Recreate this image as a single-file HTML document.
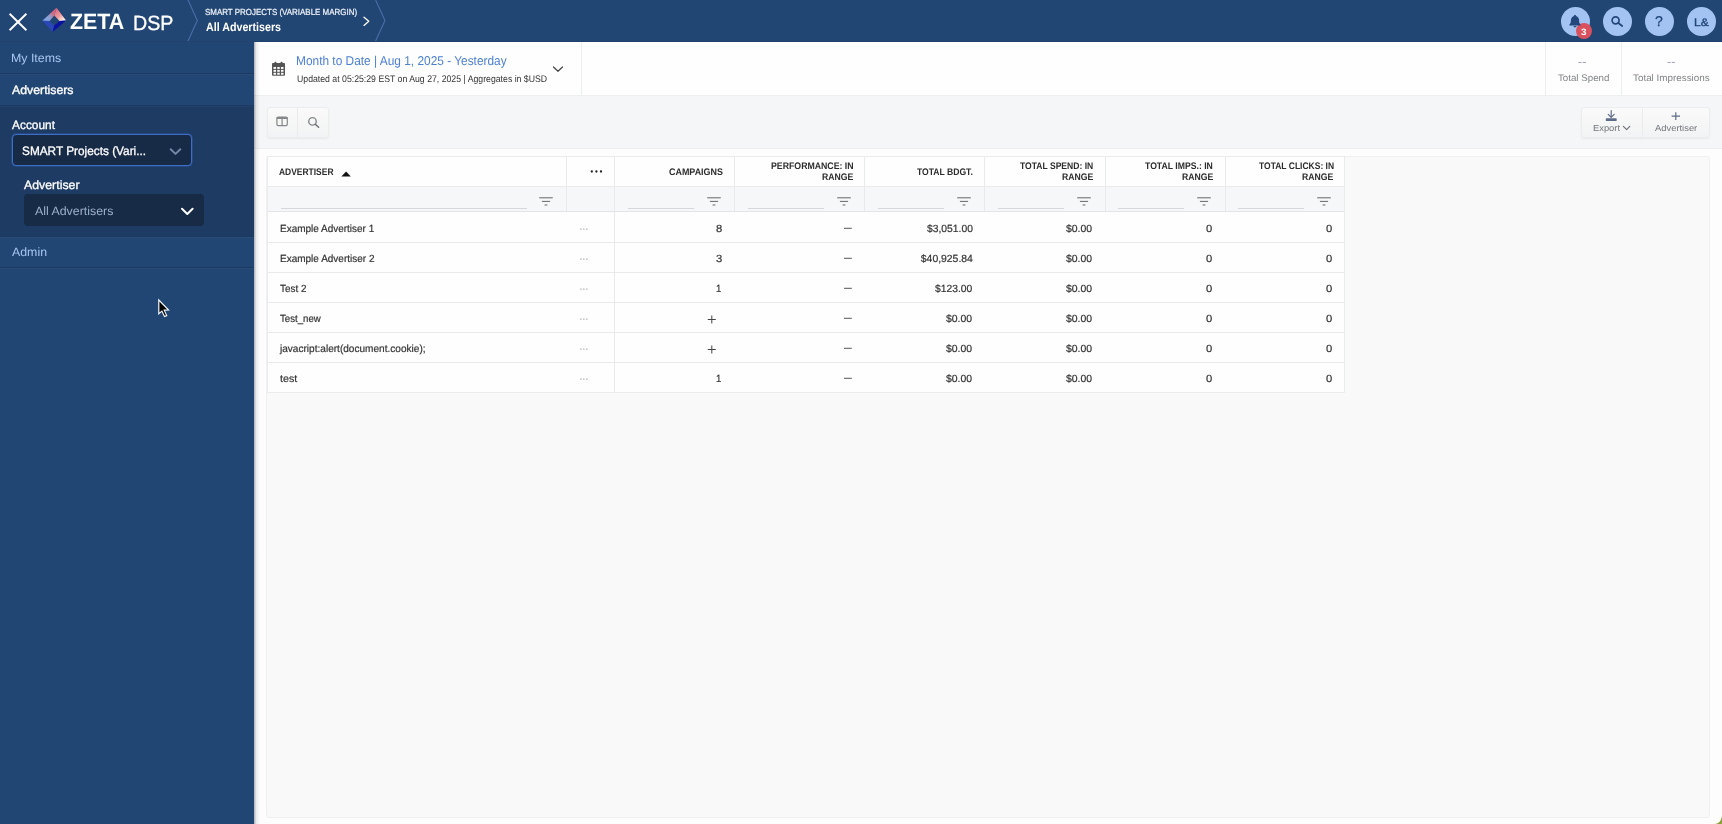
<!DOCTYPE html>
<html lang="en">
<head>
<meta charset="utf-8">
<title>Zeta DSP - All Advertisers</title>
<style>
*{box-sizing:border-box;margin:0;padding:0}
html,body{width:1722px;height:824px;overflow:hidden}
body{font-family:"Liberation Sans",Arial,sans-serif;background:#fdfdfd;color:#333;position:relative}
.a{position:absolute}
.t{position:absolute;white-space:nowrap;line-height:1;transform-origin:0 50%;text-rendering:geometricPrecision}
svg{position:absolute;overflow:visible}
#topbar{position:absolute;left:0;top:0;width:1722px;height:42px;background:#224673;border-bottom:1px solid #20426d}
#side{position:absolute;left:0;top:42px;width:254px;height:782px;background:#224673}
.sdiv{position:absolute;left:0;width:254px;height:1px;background:#1b3a63;box-shadow:0 1px 0 rgba(255,255,255,.035)}
#acct{position:absolute;left:0;top:63.5px;width:254px;height:130.5px;background:#1e3b64}
.sel{position:absolute;height:32px;width:180px;border-radius:4px;background:#172a46}
#hdr{position:absolute;left:254px;top:42px;width:1468px;height:53px;background:#fefefe}
#tool{position:absolute;left:254px;top:95px;width:1468px;height:54px;background:#f5f6f7;border-top:1px solid #eceef0;border-bottom:1px solid #ebedef}
#panel{position:absolute;left:266px;top:156px;width:1444px;height:662px;background:#f9f9f9;border:1px solid #f0f0f0;border-radius:3px}
#shadow{position:absolute;left:254px;top:42px;width:6px;height:782px;background:linear-gradient(90deg,rgba(20,30,50,.35),rgba(20,30,50,.08) 40%,rgba(0,0,0,0))}
.circ{position:absolute;top:6.5px;width:29px;height:29px;border-radius:50%;background:#a3c4f3}
.btn{position:absolute;background:linear-gradient(#fafafa,#f2f3f4);border:1px solid #eceded;border-radius:3px;box-shadow:0 1px 2px rgba(0,0,0,.06)}
#grid{position:absolute;left:267px;top:156px;width:1078px;height:237px;background:#fefefe;border:1px solid #e9ebed}
.hl{position:absolute;left:0;width:1076px;height:1px;background:#e8eaec}
.vl{position:absolute;width:1px;background:#e8eaec}
#frow{position:absolute;left:0;top:30px;width:1076px;height:24px;background:#f6f7f8}
.fl{position:absolute;height:1px;background:#d4d7db;top:51px}
</style>
</head>
<body>

<div id="topbar"></div>
<div id="side">
  <div class="sdiv" style="top:31px"></div>
  <div id="acct"></div>
  <div class="sdiv" style="top:62.5px"></div>
  <div class="sdiv" style="top:193.5px"></div>
  <div class="sdiv" style="top:225px"></div>
  <div class="sel" style="left:12px;top:92px;border:1px solid #3f6fc4;box-shadow:0 0 0 .5px #2d56a0"></div>
  <div class="sel" style="left:24px;top:152px"></div>
</div>
<div id="hdr"></div>
<div id="tool"></div>
<div id="panel"></div>

<!-- header dividers -->
<div class="a" style="left:580.5px;top:42px;width:1px;height:53px;background:#eceef0"></div>
<div class="a" style="left:1545px;top:42px;width:1px;height:53px;background:#eceef0"></div>
<div class="a" style="left:1620.5px;top:42px;width:1px;height:53px;background:#eceef0"></div>

<!-- toolbar buttons -->
<div class="btn" style="left:267px;top:107px;width:62px;height:31px"></div>
<div class="a" style="left:297px;top:108px;width:1px;height:29px;background:#eaebec"></div>
<div class="btn" style="left:1580.5px;top:107px;width:129px;height:31px"></div>
<div class="a" style="left:1642px;top:108px;width:1px;height:29px;background:#eaebec"></div>

<!-- grid -->
<div id="grid">
  <div id="frow"></div>
  <div class="hl" style="top:29px"></div>
  <div class="hl" style="top:54px;background:#e2e4e7"></div>
  <div class="hl" style="top:85px"></div>
  <div class="hl" style="top:115px"></div>
  <div class="hl" style="top:145px"></div>
  <div class="hl" style="top:175px"></div>
  <div class="hl" style="top:205px"></div>
  <div class="vl" style="left:298px;top:0;height:54px"></div>
  <div class="vl" style="left:346px;top:0;height:235px"></div>
  <div class="vl" style="left:466px;top:0;height:54px"></div>
  <div class="vl" style="left:596px;top:0;height:54px"></div>
  <div class="vl" style="left:716px;top:0;height:54px"></div>
  <div class="vl" style="left:837px;top:0;height:54px"></div>
  <div class="vl" style="left:957px;top:0;height:54px"></div>
  <div class="fl" style="left:13px;width:246px"></div>
  <div class="fl" style="left:360px;width:66px"></div>
  <div class="fl" style="left:480px;width:76px"></div>
  <div class="fl" style="left:610px;width:66px"></div>
  <div class="fl" style="left:730px;width:66px"></div>
  <div class="fl" style="left:850px;width:66px"></div>
  <div class="fl" style="left:970px;width:66px"></div>
</div>

<!-- close X -->
<svg style="left:0;top:0" width="1722" height="42" viewBox="0 0 1722 42" fill="none">
  <path d="M9.6 13.8 L26.4 30.2 M26.4 13.8 L9.6 30.2" stroke="#fff" stroke-width="1.9" stroke-linecap="butt"/>
  <!-- logo diamond -->
  <defs>
    <linearGradient id="lgTop" gradientUnits="userSpaceOnUse" x1="43" y1="20.500" x2="56" y2="9"><stop offset="0" stop-color="#7ea9ee"/><stop offset=".45" stop-color="#8f9ccb"/><stop offset=".7" stop-color="#cf6c86"/><stop offset="1" stop-color="#d9607c"/></linearGradient>
    <linearGradient id="lgR" gradientUnits="userSpaceOnUse" x1="56" y1="9" x2="65.500" y2="20.500"><stop offset="0" stop-color="#db6880"/><stop offset=".5" stop-color="#ee9a9a"/><stop offset=".8" stop-color="#f8dcd8"/><stop offset="1" stop-color="#ffffff"/></linearGradient>
  </defs>
  <path d="M42.300 20.800 L56.500 7.700 L54.300 15.500 L49.500 21 Z" fill="url(#lgTop)"/>
  <path d="M56.500 7.700 L66.100 20.600 L59.600 21 L54.300 15.500 Z" fill="url(#lgR)"/>
  <path d="M42.300 20.800 L49.500 21 L54.300 25.600 L52.600 32.100 Z" fill="#2b47b6"/>
  <path d="M52.600 32.100 L54.300 25.600 L59.600 21 L66.100 20.600 Z" fill="#0b11a2"/>
  <!-- breadcrumb chevrons -->
  <path d="M188 0 L197.3 20.5 L188 41" stroke="#4a6ea8" stroke-width="1.1"/>
  <path d="M375.6 0 L385 20.5 L375.6 41" stroke="#4a6ea8" stroke-width="1.1"/>
  <path d="M364 17.2 L368.8 21.3 L364 25.4" stroke="#fff" stroke-width="1.3" stroke-linecap="round" stroke-linejoin="round"/>
</svg>
<div class="circ" style="left:1560.5px"></div>
<div class="circ" style="left:1602.5px"></div>
<div class="circ" style="left:1644.5px"></div>
<div class="circ" style="left:1686.5px"></div>
<div class="a" style="left:1575.5px;top:23px;width:16px;height:16px;border-radius:50%;background:#d9505e"></div>
<svg style="left:0;top:0" width="1722" height="42" viewBox="0 0 1722 42" fill="none">
  <!-- bell -->
  <path d="M1575 15 c-.7 0 -1.1 .5 -1.1 1.1 c-2 .6 -3 2.300 -3 4.400 c0 2.300 -.6 3.300 -1.500 4.100 v.9 h11.200 v-.9 c-.9 -.8 -1.500 -1.800 -1.500 -4.100 c0 -2.100 -1 -3.800 -3 -4.400 c0 -.6 -.4 -1.100 -1.100 -1.100 z M1573.500 26 h3 c0 .8 -.7 1.300 -1.500 1.300 s-1.500 -.5 -1.500 -1.300 z" fill="#23477b"/>
  <!-- search -->
  <circle cx="1615.600" cy="20.300" r="3.500" stroke="#23477b" stroke-width="1.700"/>
  <path d="M1618.300 23 L1622.200 26" stroke="#23477b" stroke-width="1.800" stroke-linecap="round"/>
</svg>
<!-- sidebar select chevrons -->
<svg style="left:0;top:0" width="254" height="300" viewBox="0 0 254 300" fill="none">
  <path d="M170.700 149.200 L175.500 153.900 L180.300 149.200" stroke="#7487a6" stroke-width="2" stroke-linecap="round" stroke-linejoin="round"/>
  <path d="M182 208.800 L187.300 214 L192.600 208.800" stroke="#fff" stroke-width="2" stroke-linecap="round" stroke-linejoin="round"/>
  <!-- mouse cursor -->
  <path d="M158.200 298.600 L158.200 314.900 L161.700 312 L164.200 317.300 L167.500 315.900 L165 310.800 L169.900 310.600 Z" fill="#f4f7fb"/>
  <path d="M159.400 301.500 L159.400 312.500 L162.100 310.200 L164.800 315.700 L166 315.200 L163.300 309.600 L167.200 309.500 Z" fill="#050505"/>
</svg>
<!-- header icons -->
<svg style="left:254px;top:42px" width="340" height="54" viewBox="254 42 340 54" fill="none">
  <!-- calendar -->
  <path d="M272 64.500 h13 v10.300 a1 1 0 0 1 -1 1 h-11 a1 1 0 0 1 -1 -1 z" fill="#555"/>
  <rect x="272" y="63" width="13" height="2.600" rx=".8" fill="#555"/>
  <rect x="274.600" y="61.700" width="1.700" height="3" rx=".6" fill="#555"/>
  <rect x="280.700" y="61.700" width="1.700" height="3" rx=".6" fill="#555"/>
  <g fill="#fefefe">
    <rect x="273.500" y="67" width="2.500" height="1.900"/><rect x="277.250" y="67" width="2.500" height="1.900"/><rect x="281" y="67" width="2.500" height="1.900"/>
    <rect x="273.500" y="69.900" width="2.500" height="1.900"/><rect x="277.250" y="69.900" width="2.500" height="1.900"/><rect x="281" y="69.900" width="2.500" height="1.900"/>
    <rect x="273.500" y="72.800" width="2.500" height="1.900"/><rect x="277.250" y="72.800" width="2.500" height="1.900"/><rect x="281" y="72.800" width="2.500" height="1.900"/>
  </g>
  <path d="M553.500 67 L558 71.300 L562.500 67" stroke="#444" stroke-width="1.200" stroke-linecap="round" stroke-linejoin="round"/>
</svg>
<!-- toolbar icons -->
<svg style="left:254px;top:96px" width="1468" height="54" viewBox="254 96 1468 54" fill="none">
  <!-- columns -->
  <rect x="276.900" y="117.100" width="10.400" height="8.500" rx="1.300" stroke="#858789" stroke-width="1.200"/>
  <path d="M276.700 118 h10.800" stroke="#858789" stroke-width="2"/>
  <path d="M282.100 118 v7.600" stroke="#858789" stroke-width="1.200"/>
  <!-- search -->
  <circle cx="312.500" cy="121.400" r="3.750" stroke="#858789" stroke-width="1.400"/>
  <path d="M315.300 124.300 L318.600 127.300" stroke="#6f7174" stroke-width="1.500" stroke-linecap="round"/>
  <!-- export -->
  <path d="M1611.200 110.700 v6.300 M1608.200 114.300 L1611.200 117.300 L1614.200 114.300" stroke="#5f6c87" stroke-width="1.200" stroke-linecap="round" stroke-linejoin="round"/>
  <rect x="1605.800" y="118.200" width="10.900" height="2.900" rx=".9" fill="#5f6c87"/>
  <path d="M1623.400 126.300 L1626.600 129.600 L1629.800 126.300" stroke="#6c6f73" stroke-width="1.100" stroke-linecap="round" stroke-linejoin="round"/>
  <!-- plus -->
  <path d="M1675.800 112.200 v7.800 M1671.600 116.100 h8.400" stroke="#5f6c87" stroke-width="1.200"/>
</svg>
<!-- grid icons -->
<svg style="left:266px;top:156px" width="1080" height="238" viewBox="266 156 1080 238" fill="none">
  <path d="M341.400 176.600 L346.100 171.600 L350.800 176.600 Z" fill="#111"/>
  <g fill="#222"><circle cx="591.800" cy="171.500" r="1.150"/><circle cx="596.400" cy="171.500" r="1.150"/><circle cx="601" cy="171.500" r="1.150"/></g>
  <g id="fi" stroke="#666" stroke-width="1">
    <path d="M707.200 197.800 h13.600 M709.900 201.400 h8.200 M712.600 205 h2.800"/>
  </g>
  <use href="#fi" x="-168"/>
  <use href="#fi" x="130"/>
  <use href="#fi" x="250"/>
  <use href="#fi" x="370"/>
  <use href="#fi" x="490"/>
  <use href="#fi" x="610"/>
  <g id="rowi">
    <g fill="#b4b6ba"><rect x="580" y="228.500" width="1.600" height="1.200"/><rect x="583" y="228.500" width="1.600" height="1.200"/><rect x="586" y="228.500" width="1.600" height="1.200"/></g>
    <path d="M844 228.300 h7.800" stroke="#555" stroke-width="1"/>
  </g>
  <use href="#rowi" y="30"/><use href="#rowi" y="60"/><use href="#rowi" y="90"/><use href="#rowi" y="120"/><use href="#rowi" y="150"/>
  <path id="pl" d="M711.800 315.500 v8 M707.800 319.500 h8" stroke="#444" stroke-width="1"/>
  <use href="#pl" y="30"/>
</svg>
<!-- window corner -->
<svg style="left:1702px;top:804px" width="20" height="20" viewBox="0 0 20 20"><path d="M20 11.500 V20 H12.500 C17 19.500 19.500 16.500 20 11.500 Z" fill="#8c9f3d"/></svg>

<div id="txt" style="position:absolute;left:0;top:0;width:1722px;height:824px;will-change:transform">
<span class="t" style="left:69.76px;top:11px;font-size:22.2px;font-weight:700;color:#fff;transform:scaleX(0.9651);">ZETA</span>
<span class="t" style="left:132.65px;top:14px;font-size:20.6px;color:#fff;transform:scaleX(0.9554);-webkit-text-stroke:.3px #fff;">DSP</span>
<span class="t" style="left:204.56px;top:8px;font-size:8.8px;color:#f0f4fa;transform:scaleX(0.9046);-webkit-text-stroke:.2px #f0f4fa;">SMART PROJECTS (VARIABLE MARGIN)</span>
<span class="t" style="left:205.55px;top:21px;font-size:12px;font-weight:700;color:#fff;transform:scaleX(0.8898);">All Advertisers</span>
<span class="t" style="left:1655.29px;top:15px;font-size:14.2px;color:#23477b;transform:scaleX(0.9880);-webkit-text-stroke:.3px #23477b;">?</span>
<span class="t" style="left:1693.61px;top:18px;font-size:11px;color:#23477b;transform:scaleX(1.0854);-webkit-text-stroke:.4px #23477b;">L&amp;</span>
<span class="t" style="left:1580.61px;top:28px;font-size:9.2px;font-weight:700;color:#fff;transform:scaleX(1.0800);">3</span>
<span class="t" style="left:11.04px;top:52px;font-size:12px;color:#a6c6f1;transform:scaleX(1.0312);">My Items</span>
<span class="t" style="left:11.71px;top:84px;font-size:12px;color:#fff;transform:scaleX(1.0250);-webkit-text-stroke:.35px #fff;">Advertisers</span>
<span class="t" style="left:12.20px;top:119px;font-size:12.2px;color:#fff;transform:scaleX(0.9766);-webkit-text-stroke:.3px #fff;">Account</span>
<span class="t" style="left:22.35px;top:145px;font-size:12.2px;color:#fff;transform:scaleX(0.9693);-webkit-text-stroke:.3px #fff;">SMART Projects (Vari...</span>
<span class="t" style="left:23.79px;top:179px;font-size:12.2px;color:#fff;transform:scaleX(1.0117);-webkit-text-stroke:.3px #fff;">Advertiser</span>
<span class="t" style="left:34.66px;top:205px;font-size:12px;color:#9fb1cb;transform:scaleX(1.0300);">All Advertisers</span>
<span class="t" style="left:12.06px;top:246px;font-size:12px;color:#a6c6f1;transform:scaleX(1.0290);">Admin</span>
<span class="t" style="left:296.31px;top:55px;font-size:12.8px;color:#4a7fd1;transform:scaleX(0.9292);">Month to Date | Aug 1, 2025 - Yesterday</span>
<span class="t" style="left:296.73px;top:75px;font-size:9.6px;color:#333;transform:scaleX(0.9081);">Updated at 05:25:29 EST on Aug 27, 2025 | Aggregates in $USD</span>
<span class="t" style="left:1578.01px;top:58px;font-size:10px;color:#8088ad;transform:scaleX(1.2500);">--</span>
<span class="t" style="left:1666.71px;top:58px;font-size:10px;color:#8088ad;transform:scaleX(1.2500);">--</span>
<span class="t" style="left:1557.53px;top:74px;font-size:9.6px;color:#808386;transform:scaleX(1.0133);">Total Spend</span>
<span class="t" style="left:1633.32px;top:74px;font-size:9.6px;color:#808386;transform:scaleX(1.0269);">Total Impressions</span>
<span class="t" style="left:1592.64px;top:124px;font-size:8.8px;color:#73767a;transform:scaleX(1.0620);">Export</span>
<span class="t" style="left:1654.86px;top:124px;font-size:8.8px;color:#73767a;transform:scaleX(1.0667);">Advertiser</span>
<span class="t" style="left:278.69px;top:168px;font-size:9.6px;font-weight:700;color:#2c2c2c;transform:scaleX(0.8816);">ADVERTISER</span>
<span class="t" style="left:669.48px;top:168px;font-size:9.6px;font-weight:700;color:#2c2c2c;transform:scaleX(0.9311);">CAMPAIGNS</span>
<span class="t" style="left:770.90px;top:162px;font-size:9.6px;font-weight:700;color:#2c2c2c;transform:scaleX(0.9118);">PERFORMANCE: IN</span>
<span class="t" style="left:821.91px;top:173px;font-size:9.6px;font-weight:700;color:#2c2c2c;transform:scaleX(0.9014);">RANGE</span>
<span class="t" style="left:917.44px;top:168px;font-size:9.6px;font-weight:700;color:#2c2c2c;transform:scaleX(0.8945);">TOTAL BDGT.</span>
<span class="t" style="left:1020.14px;top:162px;font-size:9.6px;font-weight:700;color:#2c2c2c;transform:scaleX(0.8915);">TOTAL SPEND: IN</span>
<span class="t" style="left:1061.91px;top:173px;font-size:9.6px;font-weight:700;color:#2c2c2c;transform:scaleX(0.9014);">RANGE</span>
<span class="t" style="left:1145.44px;top:162px;font-size:9.6px;font-weight:700;color:#2c2c2c;transform:scaleX(0.9028);">TOTAL IMPS.: IN</span>
<span class="t" style="left:1181.81px;top:173px;font-size:9.6px;font-weight:700;color:#2c2c2c;transform:scaleX(0.9014);">RANGE</span>
<span class="t" style="left:1258.95px;top:162px;font-size:9.6px;font-weight:700;color:#2c2c2c;transform:scaleX(0.8859);">TOTAL CLICKS: IN</span>
<span class="t" style="left:1302.31px;top:173px;font-size:9.6px;font-weight:700;color:#2c2c2c;transform:scaleX(0.9014);">RANGE</span>
<span class="t" style="left:279.53px;top:225px;font-size:10.4px;color:#333;transform:scaleX(0.9596);-webkit-text-stroke:.2px #333;">Example Advertiser 1</span>
<span class="t" style="left:716.05px;top:225px;font-size:10.4px;color:#333;transform:scaleX(1.0800);-webkit-text-stroke:.2px #333;">8</span>
<span class="t" style="left:926.85px;top:225px;font-size:10.4px;color:#333;transform:scaleX(0.9921);-webkit-text-stroke:.2px #333;">$3,051.00</span>
<span class="t" style="left:1066.44px;top:225px;font-size:10.4px;color:#333;transform:scaleX(1.0045);-webkit-text-stroke:.2px #333;">$0.00</span>
<span class="t" style="left:1205.64px;top:225px;font-size:10.4px;color:#333;transform:scaleX(1.0800);-webkit-text-stroke:.2px #333;">0</span>
<span class="t" style="left:1325.64px;top:225px;font-size:10.4px;color:#333;transform:scaleX(1.0800);-webkit-text-stroke:.2px #333;">0</span>
<span class="t" style="left:279.53px;top:255px;font-size:10.4px;color:#333;transform:scaleX(0.9623);-webkit-text-stroke:.2px #333;">Example Advertiser 2</span>
<span class="t" style="left:716.05px;top:255px;font-size:10.4px;color:#333;transform:scaleX(1.0800);-webkit-text-stroke:.2px #333;">3</span>
<span class="t" style="left:920.84px;top:255px;font-size:10.4px;color:#333;-webkit-text-stroke:.2px #333;">$40,925.84</span>
<span class="t" style="left:1066.44px;top:255px;font-size:10.4px;color:#333;transform:scaleX(1.0045);-webkit-text-stroke:.2px #333;">$0.00</span>
<span class="t" style="left:1205.64px;top:255px;font-size:10.4px;color:#333;transform:scaleX(1.0800);-webkit-text-stroke:.2px #333;">0</span>
<span class="t" style="left:1325.64px;top:255px;font-size:10.4px;color:#333;transform:scaleX(1.0800);-webkit-text-stroke:.2px #333;">0</span>
<span class="t" style="left:279.87px;top:285px;font-size:10.4px;color:#333;transform:scaleX(0.9541);-webkit-text-stroke:.2px #333;">Test 2</span>
<span class="t" style="left:716.39px;top:285px;font-size:10.4px;color:#333;transform:scaleX(0.9200);-webkit-text-stroke:.2px #333;">1</span>
<span class="t" style="left:935.15px;top:285px;font-size:10.4px;color:#333;transform:scaleX(0.9930);-webkit-text-stroke:.2px #333;">$123.00</span>
<span class="t" style="left:1066.44px;top:285px;font-size:10.4px;color:#333;transform:scaleX(1.0045);-webkit-text-stroke:.2px #333;">$0.00</span>
<span class="t" style="left:1205.64px;top:285px;font-size:10.4px;color:#333;transform:scaleX(1.0800);-webkit-text-stroke:.2px #333;">0</span>
<span class="t" style="left:1325.64px;top:285px;font-size:10.4px;color:#333;transform:scaleX(1.0800);-webkit-text-stroke:.2px #333;">0</span>
<span class="t" style="left:279.88px;top:315px;font-size:10.4px;color:#333;transform:scaleX(0.9300);-webkit-text-stroke:.2px #333;">Test_new</span>
<span class="t" style="left:946.44px;top:315px;font-size:10.4px;color:#333;transform:scaleX(1.0045);-webkit-text-stroke:.2px #333;">$0.00</span>
<span class="t" style="left:1066.44px;top:315px;font-size:10.4px;color:#333;transform:scaleX(1.0045);-webkit-text-stroke:.2px #333;">$0.00</span>
<span class="t" style="left:1205.64px;top:315px;font-size:10.4px;color:#333;transform:scaleX(1.0800);-webkit-text-stroke:.2px #333;">0</span>
<span class="t" style="left:1325.64px;top:315px;font-size:10.4px;color:#333;transform:scaleX(1.0800);-webkit-text-stroke:.2px #333;">0</span>
<span class="t" style="left:279.72px;top:345px;font-size:10.4px;color:#333;transform:scaleX(0.9692);-webkit-text-stroke:.2px #333;">javacript:alert(document.cookie);</span>
<span class="t" style="left:946.44px;top:345px;font-size:10.4px;color:#333;transform:scaleX(1.0045);-webkit-text-stroke:.2px #333;">$0.00</span>
<span class="t" style="left:1066.44px;top:345px;font-size:10.4px;color:#333;transform:scaleX(1.0045);-webkit-text-stroke:.2px #333;">$0.00</span>
<span class="t" style="left:1205.64px;top:345px;font-size:10.4px;color:#333;transform:scaleX(1.0800);-webkit-text-stroke:.2px #333;">0</span>
<span class="t" style="left:1325.64px;top:345px;font-size:10.4px;color:#333;transform:scaleX(1.0800);-webkit-text-stroke:.2px #333;">0</span>
<span class="t" style="left:279.76px;top:375px;font-size:10.4px;color:#333;transform:scaleX(1.0296);-webkit-text-stroke:.2px #333;">test</span>
<span class="t" style="left:716.39px;top:375px;font-size:10.4px;color:#333;transform:scaleX(0.9200);-webkit-text-stroke:.2px #333;">1</span>
<span class="t" style="left:946.44px;top:375px;font-size:10.4px;color:#333;transform:scaleX(1.0045);-webkit-text-stroke:.2px #333;">$0.00</span>
<span class="t" style="left:1066.44px;top:375px;font-size:10.4px;color:#333;transform:scaleX(1.0045);-webkit-text-stroke:.2px #333;">$0.00</span>
<span class="t" style="left:1205.64px;top:375px;font-size:10.4px;color:#333;transform:scaleX(1.0800);-webkit-text-stroke:.2px #333;">0</span>
<span class="t" style="left:1325.64px;top:375px;font-size:10.4px;color:#333;transform:scaleX(1.0800);-webkit-text-stroke:.2px #333;">0</span>
</div>
<div id="shadow"></div>
</body>
</html>
